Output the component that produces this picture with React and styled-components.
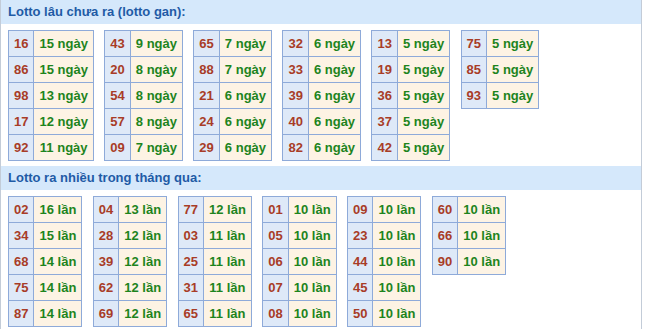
import React from "react";
import styled, { createGlobalStyle } from "styled-components";

const Global = createGlobalStyle`
  html, body { margin: 0; padding: 0; background: #fff; }
  body { font-family: "Liberation Sans", Arial, sans-serif; }
`;

const Box = styled.div`
  width: 640px;
  border-left: 1px solid #c3ccd8;
  border-right: 1px solid #c3ccd8;
  background: #fff;
`;

const Heading = styled.div`
  height: 24px;
  line-height: 24px;
  padding-left: 7px;
  background: #d5e8fb;
  color: #1f5ba6;
  font-size: 13px;
  font-weight: bold;
`;

const Body = styled.div`
  display: flex;
  flex-wrap: wrap;
  align-items: flex-start;
  gap: 10.4px;
  padding: 6px 7px 5px 7px;
`;

const Table = styled.table`
  border-collapse: collapse;
  font-size: 13px;
  font-weight: bold;
`;

const Cell = styled.td`
  border: 1px solid #8eaad9;
  height: 26px;
  padding: 0 5px;
  box-sizing: border-box;
  text-align: center;
  white-space: nowrap;
  background: ${(p) => (p.$kind === "num" ? "#dee9f8" : "#fdf3e4")};
  color: ${(p) => (p.$kind === "num" ? "#a83c27" : "#1d841d")};
`;

const gan = [
  [["16", 15], ["86", 15], ["98", 13], ["17", 12], ["92", 11]],
  [["43", 9], ["20", 8], ["54", 8], ["57", 8], ["09", 7]],
  [["65", 7], ["88", 7], ["21", 6], ["24", 6], ["29", 6]],
  [["32", 6], ["33", 6], ["39", 6], ["40", 6], ["82", 6]],
  [["13", 5], ["19", 5], ["36", 5], ["37", 5], ["42", 5]],
  [["75", 5], ["85", 5], ["93", 5]],
];

const nhieu = [
  [["02", 16], ["34", 15], ["68", 14], ["75", 14], ["87", 14]],
  [["04", 13], ["28", 12], ["39", 12], ["62", 12], ["69", 12]],
  [["77", 12], ["03", 11], ["25", 11], ["31", 11], ["65", 11]],
  [["01", 10], ["05", 10], ["06", 10], ["07", 10], ["08", 10]],
  [["09", 10], ["23", 10], ["44", 10], ["45", 10], ["50", 10]],
  [["60", 10], ["66", 10], ["90", 10]],
];

function Section({ title, groups, unit }) {
  return (
    <>
      <Heading>{title}</Heading>
      <Body>
        {groups.map((rows, i) => (
          <Table key={i}>
            <tbody>
              {rows.map(([n, c]) => (
                <tr key={n}>
                  <Cell $kind="num">{n}</Cell>
                  <Cell $kind="count">
                    {c} {unit}
                  </Cell>
                </tr>
              ))}
            </tbody>
          </Table>
        ))}
      </Body>
    </>
  );
}

export default function App() {
  return (
    <>
      <Global />
      <Box>
        <Section title="Lotto lâu chưa ra (lotto gan):" groups={gan} unit="ngày" />
        <Section title="Lotto ra nhiều trong tháng qua:" groups={nhieu} unit="lần" />
      </Box>
    </>
  );
}
